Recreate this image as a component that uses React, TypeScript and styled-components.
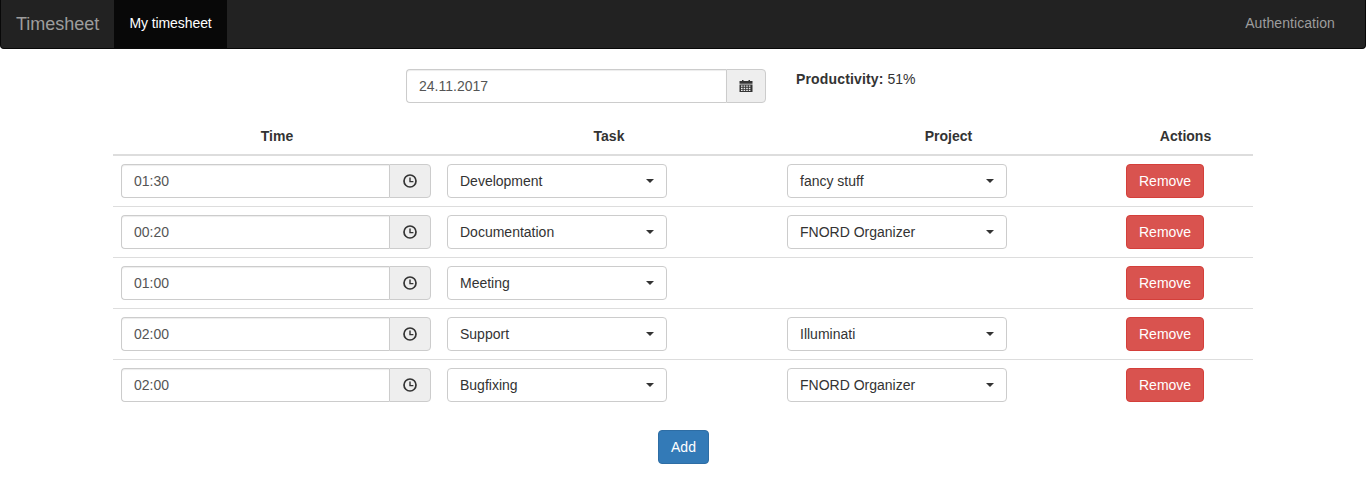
import React from "react"
import styled, { createGlobalStyle } from "styled-components"

const GlobalStyle = createGlobalStyle`
  * { box-sizing: border-box; }
  html, body { margin: 0; padding: 0; background: #fff; }
  body {
    font-family: "Liberation Sans", Arial, sans-serif;
    font-size: 14px;
    line-height: 20px;
    color: #333;
  }
`

const Navbar = styled.nav`
  display: flex;
  justify-content: space-between;
  height: 49px;
  padding-right: 15px;
  background: #222;
  border: 1px solid #080808;
  border-top: 0;
  border-radius: 0 0 4px 4px;
  margin-bottom: 20px;
`

const NavLeft = styled.div`
  display: flex;
`

const Brand = styled.a`
  padding: 14px 15px;
  font-size: 18px;
  line-height: 20px;
  color: #9d9d9d;
`

const NavLink = styled.a<{ $active?: boolean }>`
  padding: 13px 15px;
  letter-spacing: ${({ $active }) => ($active ? "-0.08px" : "0.08px")};
  color: ${({ $active }) => ($active ? "#fff" : "#9d9d9d")};
  background: ${({ $active }) => ($active ? "#080808" : "transparent")};
`

const Container = styled.div`
  width: 1140px;
  margin: 0 auto;
`

const TopRow = styled.div`
  display: flex;
  align-items: flex-start;
  margin-left: 293px;
  margin-bottom: 15px;
`

const InputGroup = styled.div<{ $width: number }>`
  display: flex;
  width: ${({ $width }) => $width}px;
  height: 34px;
`

const TextInput = styled.input`
  flex: 1;
  min-width: 0;
  height: 34px;
  padding: 6px 12px;
  font: inherit;
  color: #555;
  background: #fff;
  border: 1px solid #ccc;
  border-right: 0;
  border-radius: 4px 0 0 4px;
  box-shadow: inset 0 1px 1px rgba(0, 0, 0, 0.075);
`

const Addon = styled.span<{ $width: number }>`
  display: flex;
  align-items: center;
  justify-content: center;
  width: ${({ $width }) => $width}px;
  background: #eee;
  border: 1px solid #ccc;
  border-radius: 0 4px 4px 0;
  color: #333;
`

const Productivity = styled.div`
  margin: 0 0 0 30px;
  b { letter-spacing: 0.15px; }
`

const Table = styled.table`
  width: 1140px;
  border-collapse: collapse;
  table-layout: fixed;
`

const Th = styled.th<{ $width: number }>`
  width: ${({ $width }) => $width}px;
  padding: 8px;
  text-align: center;
  font-weight: bold;
  border-bottom: 2px solid #ddd;
  &:first-child { padding-left: 10px; }
`

const Td = styled.td`
  padding: 8px;
  height: 51px;
  vertical-align: top;
  border-bottom: 1px solid #ddd;
`

const LastRow = styled.tr`
  &:last-child ${Td} { border-bottom: 0; }
`

const SelectButton = styled.button`
  display: flex;
  align-items: center;
  justify-content: space-between;
  width: 220px;
  height: 34px;
  padding: 6px 12px;
  font: inherit;
  color: #333;
  text-align: left;
  background: #fff;
  border: 1px solid #ccc;
  border-radius: 4px;
`

const Caret = styled.span`
  display: block;
  width: 0;
  height: 0;
  border-top: 4px solid #333;
  border-left: 4px solid transparent;
  border-right: 4px solid transparent;
`

const Button = styled.button<{ $variant: "danger" | "primary" }>`
  height: 34px;
  padding: 6px 12px;
  font: inherit;
  color: #fff;
  border-radius: 4px;
  background: ${({ $variant }) => ($variant === "danger" ? "#d9534f" : "#337ab7")};
  border: 1px solid ${({ $variant }) => ($variant === "danger" ? "#d43f3a" : "#2e6da4")};
`

const Footer = styled.div`
  display: flex;
  justify-content: center;
  margin-top: 19px;
  padding-left: 1px;
`

const ClockIcon = () => (
  <svg width="14" height="14" viewBox="0 0 14 14" fill="none" stroke="#333">
    <circle cx="7" cy="7" r="6" strokeWidth="1.7" />
    <path d="M7 3.4V7.6H10.4" strokeWidth="1.4" />
  </svg>
)

const CalendarIcon = () => (
  <svg width="14" height="14" viewBox="0 0 14 14" fill="#333">
    <path d="M0.5 2H3V1h1.5v1h5V1H11v1h2.5v2.8H0.5z" />
    <path fillRule="evenodd" d="M0.5 5.4h13V13h-13zM2 6.5v1.2h1.6V6.5zm2.6 0v1.2h1.6V6.5zm2.6 0v1.2h1.6V6.5zm2.6 0v1.2h1.6V6.5zM2 8.7v1.2h1.6V8.7zm2.6 0v1.2h1.6V8.7zm2.6 0v1.2h1.6V8.7zm2.6 0v1.2h1.6V8.7zM2 10.8V12h1.6v-1.2zm2.6 0V12h1.6v-1.2zm2.6 0V12h1.6v-1.2zm2.6 0V12h1.6v-1.2z" />
  </svg>
)

const entries = [
  { time: "01:30", task: "Development", project: "fancy stuff" },
  { time: "00:20", task: "Documentation", project: "FNORD Organizer" },
  { time: "01:00", task: "Meeting", project: "" },
  { time: "02:00", task: "Support", project: "Illuminati" },
  { time: "02:00", task: "Bugfixing", project: "FNORD Organizer" },
]

const Select = ({ label }: { label: string }) => (
  <SelectButton type="button">
    {label}
    <Caret />
  </SelectButton>
)

export default function App() {
  return (
    <>
      <GlobalStyle />
      <Navbar>
        <NavLeft>
          <Brand>Timesheet</Brand>
          <NavLink $active>My timesheet</NavLink>
        </NavLeft>
        <NavLink>Authentication</NavLink>
      </Navbar>
      <Container>
        <TopRow>
          <InputGroup $width={360}>
            <TextInput defaultValue="24.11.2017" />
            <Addon $width={40}><CalendarIcon /></Addon>
          </InputGroup>
          <Productivity><b>Productivity:</b> 51%</Productivity>
        </TopRow>
        <Table>
          <thead>
            <tr>
              <Th $width={326}>Time</Th>
              <Th $width={340}>Task</Th>
              <Th $width={339}>Project</Th>
              <Th $width={135}>Actions</Th>
            </tr>
          </thead>
          <tbody>
            {entries.map((entry, i) => (
              <LastRow key={i}>
                <Td>
                  <InputGroup $width={310}>
                    <TextInput defaultValue={entry.time} />
                    <Addon $width={42}><ClockIcon /></Addon>
                  </InputGroup>
                </Td>
                <Td><Select label={entry.task} /></Td>
                <Td>{entry.project && <Select label={entry.project} />}</Td>
                <Td>
                  <Button $variant="danger" type="button">Remove</Button>
                </Td>
              </LastRow>
            ))}
          </tbody>
        </Table>
        <Footer>
          <Button $variant="primary" type="button">Add</Button>
        </Footer>
      </Container>
    </>
  )
}
